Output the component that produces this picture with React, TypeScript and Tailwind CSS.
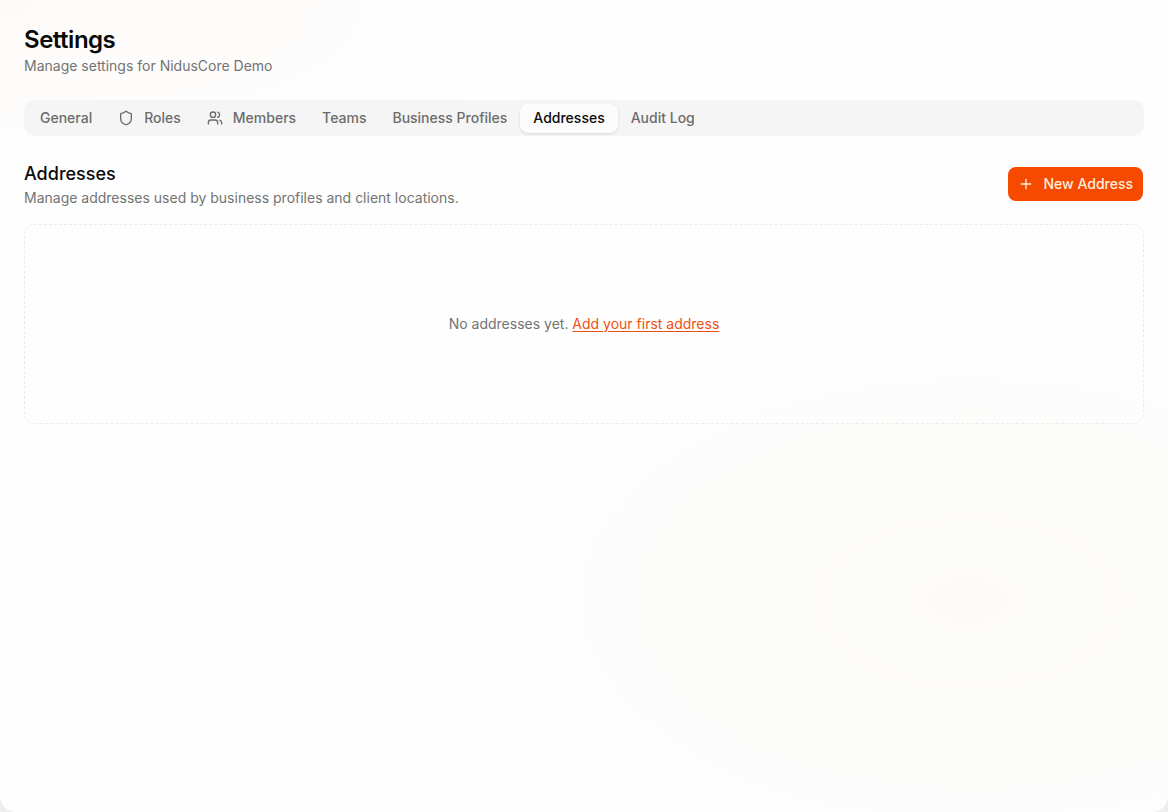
import type { ReactNode } from "react";
import { Plus, Shield, Users } from "lucide-react";
import clsx from "clsx";

interface Tab {
  label: string;
  icon?: ReactNode;
}

const TABS: Tab[] = [
  { label: "General" },
  { label: "Roles", icon: <Shield className="size-4" /> },
  { label: "Members", icon: <Users className="size-4" /> },
  { label: "Teams" },
  { label: "Business Profiles" },
  { label: "Addresses" },
  { label: "Audit Log" },
];

function TabList({ active }: { active: string }) {
  return (
    <div
      role="tablist"
      className="flex h-9 w-full items-center rounded-[10px] bg-[#f5f5f5] p-[3px]"
    >
      {TABS.map(({ label, icon }) => (
        <button
          key={label}
          type="button"
          role="tab"
          aria-selected={label === active}
          className={clsx(
            "flex h-[29px] items-center gap-2.5 rounded-lg border border-transparent px-3 text-sm font-medium whitespace-nowrap",
            label === active
              ? "bg-[#fcfcfc] text-[#0a0a0a] shadow-sm"
              : "text-[#6c6c6c]",
          )}
        >
          {icon}
          {label}
        </button>
      ))}
    </div>
  );
}

export default function App() {
  return (
    <div className="h-screen bg-[#ededed] font-['Inter',sans-serif]">
      <main className="h-full overflow-hidden rounded-b-2xl bg-[#fefefe] bg-[radial-gradient(ellipse_600px_340px_at_970px_600px,#fcfbf9,#fefefe00),radial-gradient(ellipse_560px_200px_at_0px_0px,#fdfbf9,#fefefe00)] px-6 pt-6">
        <header>
          <h1 className="text-2xl font-semibold tracking-[-0.02em] text-[#0a0a0a]">
            Settings
          </h1>
          <p className="text-sm text-[#737373]">
            Manage settings for NidusCore Demo
          </p>
        </header>

        <div className="mt-6">
          <TabList active="Addresses" />
        </div>

        <section className="mt-6">
          <div className="flex items-center justify-between pr-px">
            <div>
              <h2 className="text-lg font-medium text-[#0a0a0a]">Addresses</h2>
              <p className="text-sm text-[#737373]">
                Manage addresses used by business profiles and client locations.
              </p>
            </div>
            <button
              type="button"
              className="flex h-[34px] items-center gap-2.5 rounded-lg bg-[#f54a00] px-2.5 text-sm font-medium text-[#ffeedd]"
            >
              <Plus className="size-4" />
              New Address
            </button>
          </div>

          {/* Empty state */}
          <div className="mt-4 flex h-[200px] items-center justify-center rounded-[10px] border border-dashed border-[#ebebeb]">
            <p className="text-sm text-[#737373]">
              No addresses yet.{" "}
              <a className="cursor-pointer text-[#f0500f] underline underline-offset-2">
                Add your first address
              </a>
            </p>
          </div>
        </section>
      </main>
    </div>
  );
}
